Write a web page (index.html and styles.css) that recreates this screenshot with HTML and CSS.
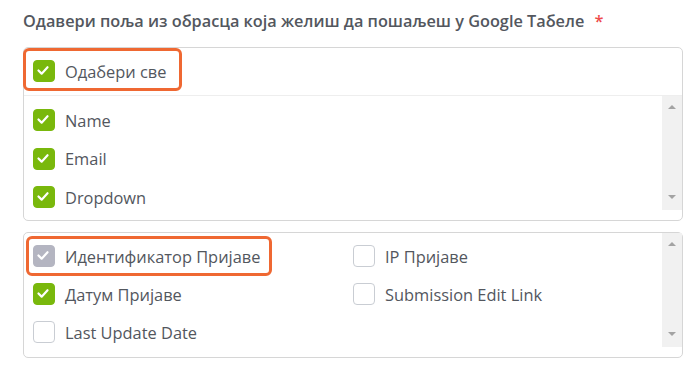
FILE: index.html
```html
<!DOCTYPE html>
<html lang="sr">
<head>
    <meta charset="UTF-8">
    <meta name="viewport" content="width=device-width, initial-scale=1.0">
    <title>Поља за Google Табеле</title>
    <link rel="stylesheet" href="styles.css">
</head>
<body>
    <div class="field">
        <div class="field-label">Одавери поља из обрасца која желиш да пошаљеш у Google Табеле <span class="req">*</span></div>

        <div class="box">
            <div class="box-head">
                <label class="opt opt-all hl"><span class="cb on"><svg viewBox="0 0 22 22"><polyline points="6,11.5 9.5,15 16,8"/></svg></span>Одабери све</label>
            </div>
            <div class="box-body">
                <div class="opt-list">
                    <label class="opt"><span class="cb on"><svg viewBox="0 0 22 22"><polyline points="6,11.5 9.5,15 16,8"/></svg></span>Name</label>
                    <label class="opt"><span class="cb on"><svg viewBox="0 0 22 22"><polyline points="6,11.5 9.5,15 16,8"/></svg></span>Email</label>
                    <label class="opt"><span class="cb on"><svg viewBox="0 0 22 22"><polyline points="6,11.5 9.5,15 16,8"/></svg></span>Dropdown</label>
                </div>
                <div class="scrollbar"><span class="arr up"></span><span class="arr down"></span></div>
            </div>
        </div>

        <div class="box">
            <div class="box-body">
                <div class="opt-grid">
                    <label class="opt hl"><span class="cb dis"><svg viewBox="0 0 22 22"><polyline points="6,11.5 9.5,15 16,8"/></svg></span>Идентификатор Пријаве</label>
                    <label class="opt"><span class="cb"></span>IP Пријаве</label>
                    <label class="opt"><span class="cb on"><svg viewBox="0 0 22 22"><polyline points="6,11.5 9.5,15 16,8"/></svg></span>Датум Пријаве</label>
                    <label class="opt"><span class="cb"></span>Submission Edit Link</label>
                    <label class="opt"><span class="cb"></span>Last Update Date</label>
                </div>
                <div class="scrollbar"><span class="arr up"></span><span class="arr down"></span></div>
            </div>
        </div>
    </div>
</body>
</html>
```

FILE: styles.css
```css
body {
    font-family: "Open Sans", "Noto Sans", sans-serif;
    margin: 0;
    padding: 0 17px 0 23px;
    background-color: #fff;
    color: #53575e;
}
.field-label {
    font-size: 16.3px;
    font-weight: 600;
    line-height: 20px;
    padding-top: 11px;
    margin-bottom: 16px;
    white-space: nowrap;
}
.req {
    color: #ee4b4b;
    margin-left: 6px;
}
.box {
    border: 1px solid #d6d6d6;
    border-radius: 5px;
    margin-bottom: 11px;
}
.box-head {
    padding: 3px 0 7px 2px;
    border-bottom: 1px solid #eeeeee;
}
.box-body {
    display: flex;
    padding-bottom: 10px;
}
.opt-list {
    flex: 1;
    height: 114px;
    padding: 7px 0 0 5px;
    box-sizing: border-box;
    display: flex;
    flex-direction: column;
    align-items: flex-start;
    gap: 4.5px;
    overflow: hidden;
}
.opt-grid {
    flex: 1;
    height: 114px;
    padding: 6px 0 0 5px;
    box-sizing: border-box;
    display: grid;
    grid-template-columns: 320px 1fr;
    grid-auto-rows: 34px;
    row-gap: 4px;
    justify-items: start;
}
.opt {
    display: inline-flex;
    align-items: center;
    flex-shrink: 0;
    height: 34px;
    padding: 0 9px 0 4px;
    font-size: 16.4px;
    box-sizing: border-box;
}
.opt-all {
    height: 37px;
    padding: 3px 12px 0 7px;
}
.hl {
    outline: 3px solid #ef6832;
    border-radius: 3px;
}
.cb {
    width: 22px;
    height: 22px;
    box-sizing: border-box;
    border: 1px solid #c9cdd3;
    border-radius: 4px;
    background-color: #fff;
    margin-right: 10px;
    flex-shrink: 0;
}
.cb svg {
    display: block;
    width: 20px;
    height: 20px;
    margin: -1px;
    fill: none;
    stroke: #fff;
    stroke-width: 2.4;
    stroke-linecap: round;
    stroke-linejoin: round;
}
.cb.on {
    background-color: #79b80c;
    border-color: #79b80c;
}
.cb.dis {
    background-color: #b4b5c1;
    border-color: #b4b5c1;
}
.scrollbar {
    width: 20px;
    height: 114px;
    background-color: #f1f1f1;
    display: flex;
    flex-direction: column;
    justify-content: space-between;
    align-items: center;
    padding: 9px 0 11px;
    box-sizing: border-box;
}
.arr {
    width: 0;
    height: 0;
    border-left: 4px solid transparent;
    border-right: 4px solid transparent;
}
.arr.up {
    border-bottom: 4px solid #a3a3a3;
}
.arr.down {
    border-top: 4px solid #a3a3a3;
}
```
